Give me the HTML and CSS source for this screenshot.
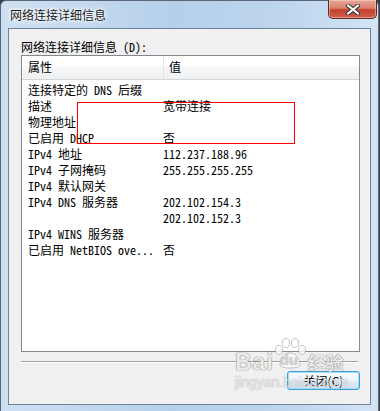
FILE: index.html
```html
<!DOCTYPE html>
<html lang="zh-CN">
<head>
<meta charset="utf-8">
<title>网络连接详细信息</title>
<link rel="stylesheet" href="styles.css">
</head>
<body>
<div class="window">
  <div class="titlebar">
    <span class="title">网络连接详细信息</span>
    <div class="close-btn">
      <svg width="16" height="11" viewBox="0 0 16 11">
        <path d="M3 1.5 L13 9.5 M13 1.5 L3 9.5" stroke="#3c3c3c" stroke-width="4.2" stroke-linecap="round"/>
        <path d="M3 1.5 L13 9.5 M13 1.5 L3 9.5" stroke="#ffffff" stroke-width="2.2" stroke-linecap="round"/>
      </svg>
    </div>
  </div>
  <div class="client">
    <div class="group-label">网络连接详细信息 (D):</div>
    <div class="listbox">
      <div class="header">
        <div class="hcell hcell-prop">属性</div>
        <div class="hcell hcell-val">值</div>
      </div>
      <div class="rows">
        <div class="row"><span class="k">连接特定的 DNS 后缀</span><span class="v"></span></div>
        <div class="row"><span class="k">描述</span><span class="v">宽带连接</span></div>
        <div class="row"><span class="k">物理地址</span><span class="v"></span></div>
        <div class="row"><span class="k">已启用 DHCP</span><span class="v">否</span></div>
        <div class="row"><span class="k">IPv4 地址</span><span class="v">112.237.188.96</span></div>
        <div class="row"><span class="k">IPv4 子网掩码</span><span class="v">255.255.255.255</span></div>
        <div class="row"><span class="k">IPv4 默认网关</span><span class="v"></span></div>
        <div class="row"><span class="k">IPv4 DNS 服务器</span><span class="v">202.102.154.3</span></div>
        <div class="row"><span class="k"></span><span class="v">202.102.152.3</span></div>
        <div class="row"><span class="k">IPv4 WINS 服务器</span><span class="v"></span></div>
        <div class="row"><span class="k">已启用 NetBIOS ove...</span><span class="v">否</span></div>
      </div>
    </div>
    <div class="separator"></div>
    <div class="button-row">
      <button class="btn">关闭(<u>C</u>)</button>
    </div>
  </div>
</div>
<div class="annotation"></div>
<div class="watermark">
  <div class="wm-line1">
    <span class="wm-bai">Bai</span>
    <span class="wm-paw">
      <svg width="36" height="32" viewBox="0 0 36 32">
        <g fill="rgba(255,255,255,0.75)" stroke="rgba(150,150,150,0.55)" stroke-width="1">
          <ellipse cx="7" cy="12" rx="3.5" ry="4.5"/>
          <ellipse cx="14" cy="5" rx="3.5" ry="4.5"/>
          <ellipse cx="23" cy="5" rx="3.5" ry="4.5"/>
          <ellipse cx="30" cy="12" rx="3.5" ry="4.5"/>
          <path d="M8 27 C8 20 13 15 18 15 C23 15 28 20 28 27 C28 31 8 31 8 27 Z"/>
        </g>
      </svg>
      <span class="wm-du">du</span>
    </span>
    <span class="wm-jy">经验</span>
  </div>
  <div class="wm-url">jingyan.baidu.com</div>
</div>
</body>
</html>
```
FILE: styles.css
```css
html, body {
  margin: 0;
  padding: 0;
}
body {
  width: 380px;
  height: 411px;
  background: #3b3f44;
  position: relative;
  overflow: hidden;
  font-family: "Noto Sans Mono CJK SC", "Noto Sans CJK SC", "Liberation Mono", monospace;
  font-size: 12px;
  color: #000;
}
.window {
  width: 379px;
  height: 411px;
  box-sizing: border-box;
  border: 1px solid #5b6776;
  border-bottom: none;
  border-radius: 6px 6px 0 0;
  background: linear-gradient(90deg, #cde0f3 0%, #b6d0ea 45%, #bdd5ed 75%, #d3e4f5 100%);
  padding: 0 7px 6px 7px;
  display: flex;
  flex-direction: column;
}
.titlebar {
  height: 27px;
  display: flex;
  align-items: flex-start;
  justify-content: space-between;
  position: relative;
}
.title {
  font-family: "Noto Sans CJK SC", sans-serif;
  font-size: 12px;
  line-height: 14px;
  margin-top: 7px;
  margin-left: 2px;
  color: #1a1a1a;
  text-shadow: 0 0 6px #fff, 0 0 4px #fff, 0 0 2px #fff;
}
.close-btn {
  width: 49px;
  height: 19px;
  margin-right: -6px;
  margin-top: -1px;
  box-sizing: border-box;
  border: 1px solid #5e2a22;
  border-top: none;
  border-radius: 0 0 5px 5px;
  background: linear-gradient(#e9a99a 0%, #d8806c 45%, #c2412c 55%, #d0604a 100%);
  box-shadow: inset 0 0 0 1px rgba(255, 220, 210, 0.45);
  display: flex;
  align-items: center;
  justify-content: center;
}
.client {
  flex: 1;
  border: 1px solid #6f849b;
  background: #f0f0f0;
  padding: 10px 10px 0 12px;
  display: flex;
  flex-direction: column;
}
.group-label {
  line-height: 16px;
  height: 16px;
}
.listbox {
  height: 297px;
  box-sizing: border-box;
  border: 1px solid #828790;
  background: #fff;
}
.header {
  height: 24px;
  box-sizing: border-box;
  display: flex;
  border-bottom: 1px solid #d5d5d5;
  background: linear-gradient(#ffffff 0%, #ffffff 45%, #f6f7f9 46%, #eff0f2 100%);
}
.hcell {
  line-height: 22px;
}
.hcell-prop {
  width: 135px;
  padding-left: 6px;
  border-right: 1px solid #e3e4e6;
}
.hcell-val {
  padding-left: 5px;
}
.rows {
  padding-top: 2px;
}
.row {
  display: flex;
  height: 16px;
  line-height: 16px;
  padding-left: 6px;
  white-space: nowrap;
}
.k {
  width: 135px;
  flex: none;
}
.v {
  flex: 1;
}
.separator {
  margin-top: 9px;
  height: 1px;
  background: #a0a0a0;
  margin-right: 2px;
  box-shadow: 0 1px 0 #fff;
}
.button-row {
  display: flex;
  justify-content: flex-end;
  margin-top: 9px;
}
.btn {
  width: 73px;
  height: 19px;
  box-sizing: border-box;
  border: 1px solid #3c9fe0;
  border-radius: 3px;
  background: linear-gradient(#f7fbfe 0%, #eef6fc 50%, #dcebf7 51%, #cfe3f3 100%);
  box-shadow: inset 0 0 0 1px rgba(160, 215, 245, 0.9);
  font-family: "Noto Sans CJK SC", sans-serif;
  font-size: 12px;
  line-height: 15px;
  color: #000;
  padding: 0;
}
.btn u {
  text-decoration: none;
}
.annotation {
  position: absolute;
  left: 77px;
  top: 102px;
  width: 216px;
  height: 40px;
  border: 1px solid #f00;
}
.watermark {
  position: absolute;
  left: 235px;
  top: 336px;
  width: 120px;
  pointer-events: none;
}
.wm-line1 {
  display: flex;
  align-items: flex-end;
  height: 36px;
}
.wm-bai {
  font-family: "Liberation Sans", sans-serif;
  font-weight: bold;
  font-size: 23px;
  line-height: 20px;
  color: rgba(255, 255, 255, 0.85);
  text-shadow: 0 0 1px rgba(120, 120, 120, 0.9), 0 0 1px rgba(120, 120, 120, 0.9);
  letter-spacing: 1px;
}
.wm-paw {
  position: relative;
  width: 36px;
  height: 34px;
  margin-left: -2px;
}
.wm-paw svg {
  position: absolute;
  left: 0;
  top: 0;
}
.wm-du {
  position: absolute;
  left: 8px;
  top: 13px;
  font-family: "Liberation Sans", sans-serif;
  font-weight: bold;
  font-size: 15px;
  color: rgba(255, 255, 255, 0.6);
  text-shadow: 0 0 1px rgba(120, 120, 120, 0.9);
}
.wm-jy {
  font-family: "Noto Sans CJK SC", sans-serif;
  font-weight: bold;
  font-size: 18px;
  line-height: 20px;
  color: rgba(255, 255, 255, 0.85);
  text-shadow: 0 0 1px rgba(120, 120, 120, 0.9), 0 0 1px rgba(120, 120, 120, 0.9);
}
.wm-url {
  font-family: "Liberation Sans", sans-serif;
  font-size: 14px;
  line-height: 16px;
  margin-top: 2px;
  color: rgba(255, 255, 255, 0.75);
  text-shadow: 0 0 1px rgba(120, 120, 120, 0.8);
}
```
